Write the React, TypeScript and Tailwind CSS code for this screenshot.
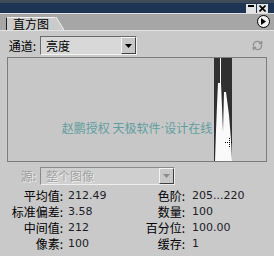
import { RefreshCw } from "lucide-react";

const cjk = "font-['Noto_Sans_CJK_SC','Noto_Sans',sans-serif]";
const num = "font-['DejaVu_Sans','Noto_Sans_CJK_SC',sans-serif]";

const stats = [
  ["平均值:", "212.49", "色阶:", "205...220"],
  ["标准偏差:", "3.58", "数量:", "100"],
  ["中间值:", "212", "百分位:", "100.00"],
  ["像素:", "100", "缓存:", "1"],
];

function DropButton({ disabled }: { disabled?: boolean }) {
  return (
    <div className="flex h-full w-[15px] items-center justify-center border border-t-[#f4f4f4] border-l-[#f4f4f4] border-r-[#404040] border-b-[#404040] bg-[#c8c8c8]">
      <svg width="7" height="4" viewBox="0 0 7 4">
        <polygon points="0,0 7,0 3.5,4" fill={disabled ? "#8c8c8c" : "#000"} />
      </svg>
    </div>
  );
}

export default function App() {
  return (
    <div className={`w-[274px] h-[256px] overflow-hidden bg-[#c9c9c9] text-[12px] text-black ${cjk}`}>
      {/* Title bar */}
      <div className="flex h-[13px] items-start justify-end gap-[1px] border-t-[3px] border-[#414a58] bg-[#1e3455] pr-[6px] pt-[1px]">
        <div className="flex h-[9px] w-[10px] items-start justify-center bg-[#e4e4e4] pt-[1px]">
          <div className="h-[2px] w-[6px] bg-black" />
        </div>
        <div className="flex h-[9px] w-[11px] items-center justify-center bg-[#e4e4e4]">
          <svg width="7" height="7" viewBox="0 0 7 7">
            <path d="M0.5 0.5L6.5 6.5M6.5 0.5L0.5 6.5" stroke="#000" strokeWidth="1.6" />
          </svg>
        </div>
      </div>

      {/* Tab row */}
      <div className="flex h-[17px] items-end border-t border-[#dedede] bg-[#a6a6a6] pl-[6px] pr-[4px]">
        <div className="flex h-[13px] items-center border-l border-t border-l-[#202020] border-t-[#f0f0f0] bg-[#cbcbcb] pl-[6px] pr-[6px] leading-none">
          直方图
        </div>
        <svg width="9" height="13" viewBox="0 0 9 13" className="block">
          <polygon points="0,0 1,0 9,13 0,13" fill="#cbcbcb" />
          <line x1="1" y1="0" x2="9" y2="13" stroke="#f0f0f0" strokeWidth="1" />
        </svg>
        <div className="ml-auto mb-[2px] flex h-[13px] w-[13px] items-center justify-center rounded-full border border-black bg-[#f2f2f2]">
          <svg width="5" height="7" viewBox="0 0 5 7">
            <polygon points="0,0 5,3.5 0,7" fill="#000" />
          </svg>
        </div>
      </div>

      {/* Body */}
      <div className="border-t border-[#e2e2e2] pt-[5px]">
        <div className="flex h-[19px] items-center">
          <div className="w-[36px] text-right leading-none">通道:</div>
          <div className="ml-[4px] flex h-[19px] w-[97px] items-center border border-t-[#6a6a6a] border-l-[#6a6a6a] border-r-[#f2f2f2] border-b-[#f2f2f2] bg-[#d8d8d8]">
            <span className="flex-1 pl-[5px] leading-none">亮度</span>
            <DropButton />
          </div>
          <RefreshCw className="ml-auto mr-[11px] text-[#8f8f8f]" size={11} strokeWidth={3} />
        </div>

        {/* Histogram */}
        <div className="relative ml-[7px] mt-[2px] h-[105px] w-[260px] border border-[#7c7c7c] bg-[#c7c7c7]">
          <div className="flex h-full items-center justify-center pt-[36px] text-[12px] leading-none text-[#5f9ea0]">
            赵鹏授权 天极软件<span className={num}>·</span>设计在线
          </div>
          <svg className="absolute left-0 top-0" width="258" height="103" viewBox="8 58 258 103">
            <rect x="214" y="58" width="18" height="103" fill="#303030" />
            <rect x="220" y="58" width="1" height="26" fill="#f8f8f8" />
            <polygon
              points="218,83 221,83 223,132 224,92 226,92 229,115 231,140 232,161 215,161 216,130 217,105"
              fill="#fafafa"
            />
            <path d="M225 142.5H233M229.5 138V147" stroke="#000" strokeWidth="1" strokeDasharray="1 1" />
          </svg>
        </div>

        {/* Source */}
        <div className="mt-[5px] flex h-[18px] items-center">
          <div className="w-[36px] text-right leading-none text-[#9a9a9a] [text-shadow:1px_1px_0_#efefef]">源:</div>
          <div className="ml-[4px] flex h-[18px] w-[135px] items-center border border-t-[#8a8a8a] border-l-[#8a8a8a] border-r-[#eeeeee] border-b-[#eeeeee] bg-[#cfcfcf]">
            <span className="flex-1 pl-[5px] leading-none text-[#a2a2a2] [text-shadow:1px_1px_0_#efefef]">整个图像</span>
            <DropButton disabled />
          </div>
        </div>

        {/* Stats */}
        <div className="mt-[3px] grid grid-cols-[63px_58px_64px_1fr]">
          {stats.map((r) => (
            <div key={r[0]} className="contents">
              <div className="h-[16px] text-right leading-[16px]">{r[0]}</div>
              <div className={`h-[16px] pl-[5px] text-[11px] leading-[16px] text-[#221c28] ${num}`}>{r[1]}</div>
              <div className="h-[16px] text-right leading-[16px]">{r[2]}</div>
              <div className={`h-[16px] pl-[7px] text-[11px] leading-[16px] text-[#221c28] ${num}`}>{r[3]}</div>
            </div>
          ))}
        </div>
      </div>
    </div>
  );
}
